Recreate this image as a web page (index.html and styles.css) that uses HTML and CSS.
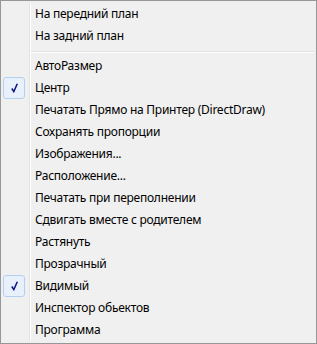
FILE: index.html
```html
<!DOCTYPE html>
<html lang="ru">
<head>
  <meta charset="UTF-8" />
  <title>Контекстное меню</title>
  <link rel="stylesheet" href="styles.css">
</head>
<body>
  <div class="menu">
    <ul class="menu-list">
      <li class="item">На передний план</li>
      <li class="item">На задний план</li>
      <li class="sep"></li>
      <li class="item">АвтоРазмер</li>
      <li class="item checked">Центр</li>
      <li class="item">Печатать Прямо на Принтер (DirectDraw)</li>
      <li class="item">Сохранять пропорции</li>
      <li class="item">Изображения...</li>
      <li class="item">Расположение...</li>
      <li class="item">Печатать при переполнении</li>
      <li class="item">Сдвигать вместе с родителем</li>
      <li class="item">Растянуть</li>
      <li class="item">Прозрачный</li>
      <li class="item checked">Видимый</li>
      <li class="item">Инспектор обьектов</li>
      <li class="item">Программа</li>
    </ul>
  </div>
</body>
</html>
```

FILE: styles.css
```css
body { margin: 0; background: #f0f0f0; }
.menu { width: 317px; height: 344px; box-sizing: border-box; border: 1px solid #979797; background: #f0f0f0; padding: 2px; font-family: "Noto Sans", "Open Sans", sans-serif; font-size: 12px; letter-spacing: -0.25px; color: #000; }
.menu-list { list-style: none; margin: 0; padding: 0; height: 100%;
  background: linear-gradient(to right, transparent 26px, #e2e3e3 26px, #e2e3e3 27px, #fff 27px, #fff 28px, transparent 28px); }
.item { position: relative; height: 22px; line-height: 22px; padding-left: 32px; white-space: nowrap; }
.sep { height: 8px; margin-left: 28px; display: flex; flex-direction: column; justify-content: center; }
.sep::before { content: ""; display: block; height: 1px; background: #e0e0e0; border-bottom: 1px solid #fff; margin-top: 1px; }
.checked::before { content: ""; position: absolute; left: 0; top: 0; width: 20px; height: 20px; border: 1px solid #b4d0f0; border-radius: 3px; background: #e8f0fb; }
.checked::after { content: ""; position: absolute; left: 8px; top: 6px; width: 7px; height: 10px;
  background: url("data:image/svg+xml,%3Csvg xmlns='http://www.w3.org/2000/svg' width='7' height='10'%3E%3Cpath d='M0.8 5.5 L2.8 8.6 L6.3 0.8' fill='none' stroke='%230c1580' stroke-width='1.5'/%3E%3C/svg%3E") no-repeat; }
```
